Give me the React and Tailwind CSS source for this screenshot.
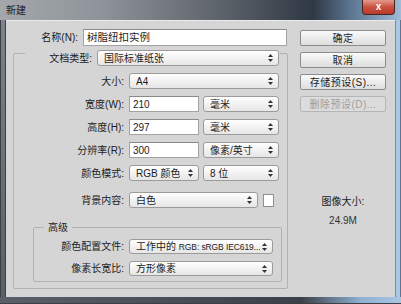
import React from 'react'

const font = { fontFamily: '"Liberation Sans", "Noto Sans CJK SC", sans-serif' }

function Arrows() {
  return (
    <svg width="5" height="8" viewBox="0 0 5 8" className="shrink-0">
      <path d="M2.5 0 L5 3 L0 3 Z" fill="#333" />
      <path d="M2.5 8 L5 5 L0 5 Z" fill="#333" />
    </svg>
  )
}

function Select({ w, h = 'h-[16px]', children }) {
  return (
    <div
      className={`${w} ${h} flex items-center justify-between rounded-[3px] border border-[#9b9b9b] bg-linear-to-b from-white to-[#e6e6e6] pl-[6px] pr-[5px] text-[10px] text-[#1c1c1c]`}
    >
      <span className="overflow-hidden whitespace-nowrap">{children}</span>
      <Arrows />
    </div>
  )
}

function Input({ w, h = 'h-[16px]', children, big }) {
  return (
    <div
      className={`${w} ${h} flex items-center border border-[#a3a3a3] border-t-[#8a8a8a] bg-white pl-[3px] ${big ? 'text-[10.5px]' : 'text-[10px]'} text-[#1c1c1c]`}
    >
      {children}
    </div>
  )
}

function Label({ w, children }) {
  return <div className={`${w} shrink-0 text-right text-[10px] text-[#1c1c1c] whitespace-nowrap`}>{children}</div>
}

function Button({ children, disabled }) {
  return (
    <div
      className={`h-[16px] w-[86px] flex items-center justify-center rounded-[2px] border text-[10px] tracking-[0.5px] ${
        disabled
          ? 'border-[#b5b5b5] bg-[#dcdcdc] text-[#9c9c9c]'
          : 'border-[#8c8c8c] bg-linear-to-b from-[#fafafa] to-[#dedede] text-[#1c1c1c]'
      }`}
    >
      {children}
    </div>
  )
}

function Row({ label, children, mt = 'mt-[7px]' }) {
  return (
    <div className={`${mt} flex items-center`}>
      <Label w="w-[110px]">{label}</Label>
      <div className="ml-[5px] flex items-center gap-[4px]">{children}</div>
    </div>
  )
}

export default function App() {
  return (
    <div style={font} className="flex h-[304px] w-[401px] flex-col overflow-hidden">
      {/* title bar */}
      <div className="relative flex h-[20px] shrink-0 items-center bg-[linear-gradient(90deg,#a4a8ad_0%,#8f949a_25%,#5d636a_55%,#2f3844_78%,#5e7894_88%,#9fbbd6_100%)] pl-[6px]">
        <span className="text-[10px] text-[#1a1a1a]">新建</span>
        <div className="absolute right-[6px] top-0 flex h-[15px] w-[33px] items-center justify-center rounded-b-[4px] border border-t-0 border-[#4a2520] bg-linear-to-b from-[#e49a8c] via-[#c9503f] to-[#b93a2a]">
          <span className="text-[10px] font-bold leading-none text-white">x</span>
        </div>
      </div>

      <div className="flex flex-1">
        {/* left frame */}
        <div className="w-[6px] shrink-0 border-x border-[#3c4148] bg-linear-to-b from-[#7d838a] to-[#5a6068]" />

        {/* content */}
        <div className="flex flex-1 border-t border-[#eaeaea] bg-[#d5d5d5]">
          {/* left column */}
          <div className="w-[294px] shrink-0 pt-[8px]">
            <div className="flex items-center">
              <Label w="w-[72px]">名称(N):</Label>
              <div className="ml-[5px]">
                <Input w="w-[204px]" h="h-[17px]" big>
                  树脂纽扣实例
                </Input>
              </div>
            </div>

            {/* main group */}
            <div className="ml-[7px] mt-[7px] flex h-[236px] w-[275px] flex-col rounded-[2px] border border-[#b2b2b2]">
              <div className="-mt-[4px] ml-[11px] flex w-fit items-center bg-[#d5d5d5] pr-[1px]">
                <Label w="w-[67px]">文档类型:</Label>
                <div className="ml-[5px]">
                  <Select w="w-[182px]">国际标准纸张</Select>
                </div>
              </div>

              <Row label="大小:">
                <Select w="w-[150px]">A4</Select>
              </Row>
              <Row label="宽度(W):">
                <Input w="w-[70px]">210</Input>
                <Select w="w-[76px]">毫米</Select>
              </Row>
              <Row label="高度(H):">
                <Input w="w-[70px]">297</Input>
                <Select w="w-[76px]">毫米</Select>
              </Row>
              <Row label="分辨率(R):">
                <Input w="w-[70px]">300</Input>
                <Select w="w-[76px]">像素/英寸</Select>
              </Row>
              <Row label="颜色模式:">
                <Select w="w-[70px]">RGB 颜色</Select>
                <Select w="w-[76px]">8 位</Select>
              </Row>
              <Row label="背景内容:" mt="mt-[11px]">
                <Select w="w-[129px]">白色</Select>
                <div className="ml-[1px] h-[13px] w-[11px] border border-[#8f8f8f] bg-white" />
              </Row>

              {/* advanced group */}
              <div className="ml-[19px] mt-[19px] flex h-[55px] w-[249px] flex-col rounded-[2px] border border-[#b2b2b2]">
                <div className="-mt-[7px] ml-[10px] h-[13px] w-fit bg-[#d5d5d5] px-[4px] text-[10px] leading-[13px] text-[#1c1c1c]">
                  高级
                </div>
                <div className="mt-[5px] flex items-center">
                  <Label w="w-[90px]">颜色配置文件:</Label>
                  <div className="ml-[5px]">
                    <Select w="w-[144px]" h="h-[15px]">
                      工作中的 <span className="text-[8.5px] tracking-[-0.1px]">RGB: sRGB IEC619...</span>
                    </Select>
                  </div>
                </div>
                <div className="mt-[7px] flex items-center">
                  <Label w="w-[90px]">像素长宽比:</Label>
                  <div className="ml-[5px]">
                    <Select w="w-[144px]" h="h-[15px]">方形像素</Select>
                  </div>
                </div>
              </div>
            </div>
          </div>

          {/* right column */}
          <div className="flex w-[86px] shrink-0 flex-col items-center pt-[9px]">
            <Button>确定</Button>
            <div className="mt-[6px]">
              <Button>取消</Button>
            </div>
            <div className="mt-[6px]">
              <Button>存储预设(S)...</Button>
            </div>
            <div className="mt-[6px]">
              <Button disabled>删除预设(D)...</Button>
            </div>
            <div className="mt-[83px] text-[10px] leading-[13px] text-[#1c1c1c]">图像大小:</div>
            <div className="mt-[6px] text-[10px] leading-[13px] text-[#333]">24.9M</div>
          </div>
        </div>

        {/* right frame */}
        <div className="w-[6px] shrink-0 border-l border-[#7d8a97] border-r border-r-[#5d7590] bg-[#a9c6e2]" />
      </div>

      {/* bottom frame */}
      <div className="h-[7px] shrink-0 border-b border-[#3c4148] bg-[linear-gradient(90deg,#5a6068_0%,#4a5058_40%,#3a4048_75%,#8fb0d0_90%,#a9c6e2_100%)]" />
    </div>
  )
}
